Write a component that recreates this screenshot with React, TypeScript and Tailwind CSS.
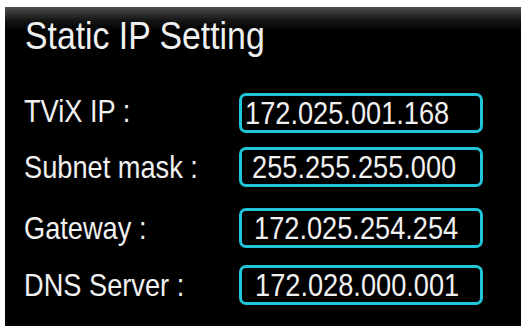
const rows = [
  { label: 'TViX IP :', value: '172.025.001.168', mt: 'mt-[38px]', lt: '-mt-[4px]', pl: 'pl-[3px]' },
  { label: 'Subnet mask :', value: '255.255.255.000', mt: 'mt-[14px]', lt: 'mt-0', pl: 'pl-[10px]' },
  { label: 'Gateway :', value: '172.025.254.254', mt: 'mt-[21px]', lt: 'mt-0', pl: 'pl-[12px]' },
  { label: 'DNS Server :', value: '172.028.000.001', mt: 'mt-[17px]', lt: 'mt-0', pl: 'pl-[13px]' },
];

export default function App() {
  return (
    <div className="w-[521px] h-[326px] bg-white pt-[7px] pl-[5px] flex">
      <div
        className="flex-1 flex flex-col bg-[linear-gradient(to_bottom,#4f4f4f_0px,#161616_13px,#000_24px)] pl-[19px] text-[#f0f0f0]"
        style={{ fontFamily: '"Liberation Sans", Arial, sans-serif' }}
      >
        <div className="pt-[9px] pl-px text-[39px] leading-none">
          <span className="inline-block origin-left scale-x-[0.866] whitespace-nowrap">Static IP Setting</span>
        </div>

        {rows.map((r, i) => (
          <div key={i} className={`flex items-center h-[40px] ${r.mt}`}>
            <div className={`w-[215px] text-[32px] leading-none ${r.lt}`}>
              <span className="inline-block origin-left scale-x-[0.85] whitespace-nowrap">{r.label}</span>
            </div>
            <div className={`w-[244px] h-[40px] border-[3px] border-[#1fc6da] rounded-[7px] flex items-center ${r.pl}`}>
              <span className="inline-block origin-left scale-x-[0.85] whitespace-nowrap text-[32px] leading-none">{r.value}</span>
            </div>
          </div>
        ))}
      </div>
    </div>
  );
}
